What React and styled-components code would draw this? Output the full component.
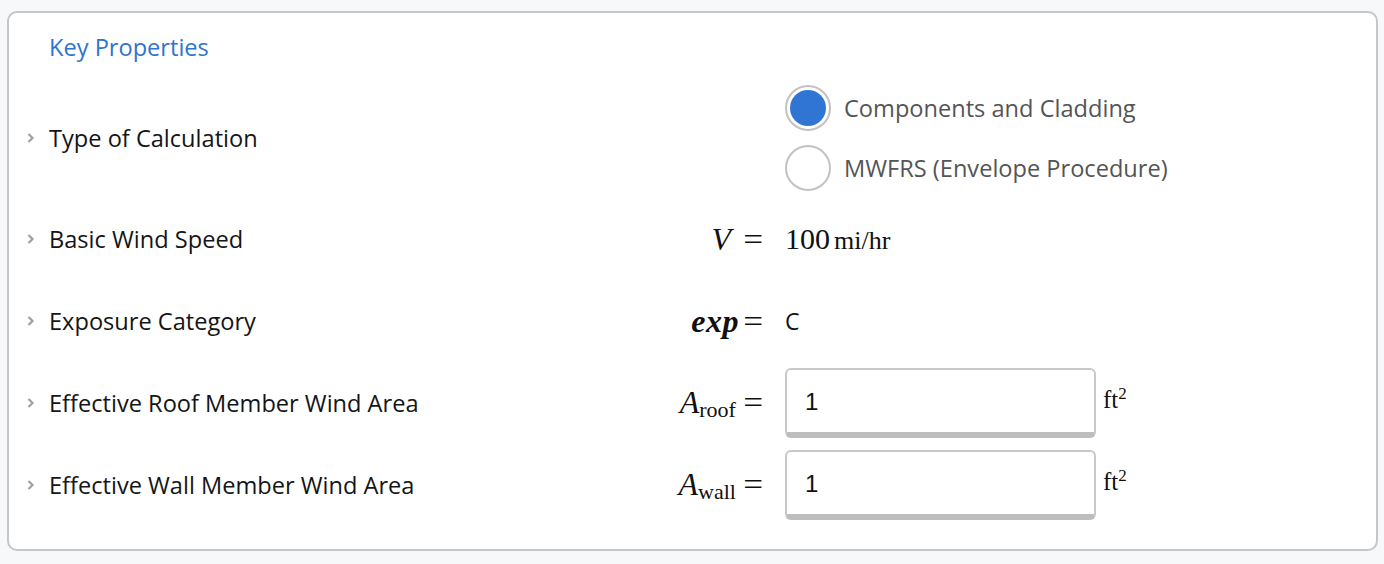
import React from "react";
import styled, { createGlobalStyle } from "styled-components";

const GlobalStyle = createGlobalStyle`
  html, body {
    margin: 0;
    padding: 0;
    background: #f7f8fa;
    font-family: "Open Sans", "Noto Sans", sans-serif;
  }
`;

const Page = styled.div`
  padding: 11px 6px 13px 7px;
`;

const Card = styled.div`
  background: #fff;
  border: 2px solid #c6c6c6;
  border-radius: 10px;
  height: 540px;
  box-sizing: border-box;
`;

const Title = styled.div`
  color: #2f74d0;
  font-size: 23.6px;
  height: 65px;
  padding-left: 40px;
  display: flex;
  align-items: center;
  padding-top: 8px;
  padding-bottom: 5px;
  box-sizing: border-box;
`;

const Row = styled.div`
  display: grid;
  grid-template-columns: 23px 551px 163px 22px 311px auto;
  align-items: center;
  height: ${(p) => p.h || 82}px;
  padding-left: 17px;
`;

const Chevron = styled.div`
  display: flex;
  align-items: center;
  color: #a0a0a0;
`;

const Label = styled.div`
  font-size: 23.6px;
  color: #151515;
  white-space: nowrap;
`;

const MathCell = styled.div`
  text-align: right;
  font-family: "Liberation Serif", "DejaVu Serif", serif;
  font-size: 32px;
  color: #111;
  white-space: nowrap;
`;

const Var = styled.i`
  font-style: italic;
  font-weight: ${(p) => (p.bold ? 700 : 400)};
  letter-spacing: ${(p) => (p.bold ? "0.5px" : "0")};
`;

const Sub = styled.span`
  font-style: normal;
  font-size: 22px;
  vertical-align: -4px;
`;

const Eq = styled.span`
  margin-left: ${(p) => p.gap || 9}px;
  display: inline-block;
  transform: scaleX(1.1);
  transform-origin: right center;
`;

const Value = styled.div`
  grid-column: 5 / 7;
  font-size: 23px;
  color: #111;
  display: flex;
  align-items: baseline;
`;

const Number = styled.span`
  font-family: "Liberation Serif", "DejaVu Serif", serif;
  font-size: 30px;
`;

const Unit = styled.span`
  font-family: "Liberation Serif", "DejaVu Serif", serif;
  font-size: 26px;
  margin-left: 4px;
`;

const RadioGroup = styled.div`
  grid-column: 5 / 7;
  display: flex;
  flex-direction: column;
`;

const Option = styled.div`
  display: flex;
  align-items: center;
  height: 60px;
  gap: 13px;
  color: #555;
  font-size: 23.6px;
  white-space: nowrap;
`;

const Circle = styled.span`
  width: 46px;
  height: 46px;
  flex: none;
  box-sizing: border-box;
  border-radius: 50%;
  border: 2px solid #c2c2c2;
  padding: 3px;
  display: inline-flex;
  &::after {
    content: "";
    flex: 1;
    border-radius: 50%;
    background: ${(p) => (p.checked ? "#3175d4" : "transparent")};
  }
`;

const InputWrap = styled.div`
  display: flex;
  align-items: flex-start;
  grid-column: 5 / 7;
`;

const Input = styled.input`
  width: 311px;
  height: 70px;
  box-sizing: border-box;
  border: 2px solid #c8c8c8;
  border-bottom: 6px solid #bdbdbd;
  border-radius: 6px;
  padding: 2px 18px 0;
  font-family: "Liberation Sans", Arial, sans-serif;
  font-size: 24px;
  color: #111;
  outline: none;
`;

const Ft = styled.span`
  font-family: "Liberation Serif", "DejaVu Serif", serif;
  font-size: 25px;
  margin: 16px 0 0 7px;
  color: #111;
  sup {
    font-size: 17px;
  }
`;

function Arrow() {
  return (
    <Chevron>
      <svg width="9" height="12" viewBox="0 0 9 12">
        <polyline
          points="2.5,2 6.5,6 2.5,10"
          fill="none"
          stroke="currentColor"
          strokeWidth="2.2"
        />
      </svg>
    </Chevron>
  );
}

function AreaRow({ label, sub }) {
  return (
    <Row>
      <Arrow />
      <Label>{label}</Label>
      <MathCell>
        <Var>A</Var>
        <Sub>{sub}</Sub>
        <Eq>=</Eq>
      </MathCell>
      <span />
      <InputWrap>
        <Input defaultValue="1" />
        <Ft>
          ft<sup>2</sup>
        </Ft>
      </InputWrap>
    </Row>
  );
}

export default function App() {
  return (
    <>
      <GlobalStyle />
      <Page>
        <Card>
          <Title>Key Properties</Title>
          <Row h={120}>
            <Arrow />
            <Label>Type of Calculation</Label>
            <span />
            <span />
            <RadioGroup>
              <Option>
                <Circle checked />
                Components and Cladding
              </Option>
              <Option>
                <Circle />
                MWFRS (Envelope Procedure)
              </Option>
            </RadioGroup>
          </Row>
          <Row>
            <Arrow />
            <Label>Basic Wind Speed</Label>
            <MathCell>
              <Var>V</Var>
              <Eq gap={14}>=</Eq>
            </MathCell>
            <span />
            <Value>
              <Number>100</Number>
              <Unit>mi/hr</Unit>
            </Value>
          </Row>
          <Row>
            <Arrow />
            <Label>Exposure Category</Label>
            <MathCell>
              <Var bold>exp</Var>
              <Eq gap={6}>=</Eq>
            </MathCell>
            <span />
            <Value>C</Value>
          </Row>
          <AreaRow label="Effective Roof Member Wind Area" sub="roof" />
          <AreaRow label="Effective Wall Member Wind Area" sub="wall" />
        </Card>
      </Page>
    </>
  );
}
